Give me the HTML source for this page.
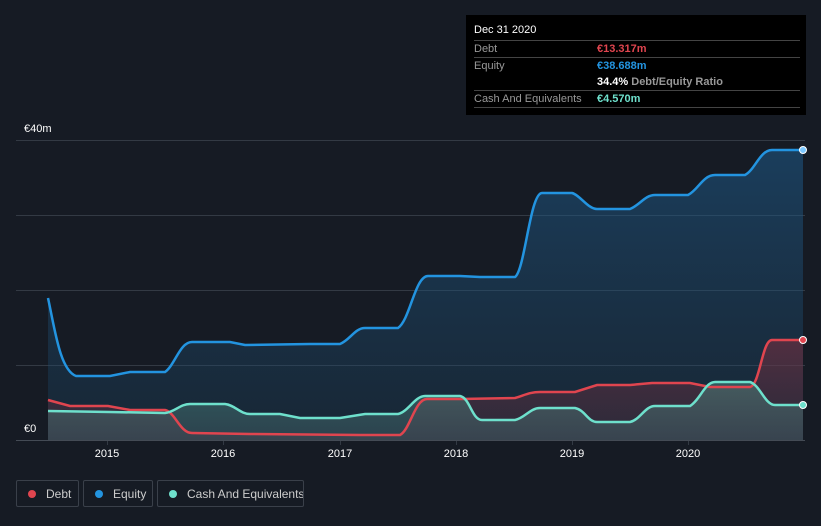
<!DOCTYPE html>
<html><head><style>
body{margin:0;width:821px;height:526px;background:#161b24;font-family:"Liberation Sans",sans-serif;overflow:hidden;position:relative}
.tt{position:absolute;left:466px;top:15px;width:340px;height:100px;background:#000;color:#fff;font-size:11px}
.row{position:absolute;left:8px;width:326px;border-top:1px solid #444}
.lbl{position:absolute;left:0;color:#999}
.val{position:absolute;left:123px;font-weight:bold;white-space:nowrap}
.leg{position:absolute;top:480px;height:27px;border:1px solid #3a404a;border-radius:2px;color:#ccc;font-size:12px;line-height:26px;box-sizing:border-box;white-space:nowrap;overflow:hidden}
.dot{display:inline-block;width:8px;height:8px;border-radius:50%;margin:0 10px 0 11px;vertical-align:0px}
</style></head><body>
<svg width="821" height="526" style="position:absolute;left:0;top:0">
<defs>
<linearGradient id="ge" x1="0" y1="0" x2="0" y2="1"><stop offset="0" stop-color="#1e5a8a" stop-opacity=".55"/><stop offset="1" stop-color="#1e4a6a" stop-opacity=".25"/></linearGradient>
<linearGradient id="gd" x1="0" y1="0" x2="0" y2="1"><stop offset="0" stop-color="#8a3040" stop-opacity=".5"/><stop offset="1" stop-color="#5a3040" stop-opacity=".3"/></linearGradient>
<linearGradient id="gc" x1="0" y1="0" x2="0" y2="1"><stop offset="0" stop-color="#4a8a80" stop-opacity=".5"/><stop offset="1" stop-color="#4a6a70" stop-opacity=".4"/></linearGradient>
</defs>
<g stroke="#333a44" stroke-width="1">
<line x1="16" y1="140.5" x2="805" y2="140.5"/><line x1="16" y1="215.5" x2="805" y2="215.5"/><line x1="16" y1="290.5" x2="805" y2="290.5"/><line x1="16" y1="365.5" x2="805" y2="365.5"/>
<line x1="16" y1="440.5" x2="805" y2="440.5" stroke="#444b55"/>
<line x1="107.5" y1="441" x2="107.5" y2="445"/><line x1="223.5" y1="441" x2="223.5" y2="445"/><line x1="340.5" y1="441" x2="340.5" y2="445"/><line x1="456.5" y1="441" x2="456.5" y2="445"/><line x1="572.5" y1="441" x2="572.5" y2="445"/><line x1="688.5" y1="441" x2="688.5" y2="445"/>
</g>
<path fill="url(#ge)" d="M48,298 C55,330 60,370 76,376 L110,376 L130,372 L165,372 C175,365 180,342 192,342 L230,342 L245,345 L310,344 L340,344 C350,340 355,328 365,328 L398,328 C410,320 415,276 428,276 L460,276 L480,277 L515,277 C525,270 530,193 542,193 L572,193 C580,195 588,209 597,209 L630,209 C640,205 645,195 655,195 L688,195 C698,190 703,175 715,175 L745,175 C755,170 760,150 772,150 L803,150 L803,440 L48,440Z"/>
<path fill="url(#gd)" d="M48,400 L70,406 L108,406 L130,410 L165,410 C175,412 180,433 192,433 L250,434 L360,435 L400,435 C410,430 415,399 427,399 L460,399 L515,398 C525,395 530,392 540,392 L575,392 L597,385 L630,385 L652,383 L690,383 L710,387 L750,387 C760,385 762,340 772,340 L803,340 L803,440 L48,440Z"/>
<path fill="url(#gc)" d="M48,411 L110,412 L165,413 C175,412 180,404 190,404 L225,404 C235,405 240,414 250,414 L280,414 L300,418 L340,418 L365,414 L398,414 C408,412 415,396 425,396 L460,396 C470,398 472,420 482,420 L515,420 C525,418 530,408 540,408 L575,408 C585,410 588,422 597,422 L630,422 C640,420 645,406 655,406 L690,406 C700,400 705,382 715,382 L750,382 C760,385 765,405 775,405 L803,405 L803,440 L48,440Z"/>
<g fill="none" stroke-width="2.5">
<path stroke="#e0454f" d="M48,400 L70,406 L108,406 L130,410 L165,410 C175,412 180,433 192,433 L250,434 L360,435 L400,435 C410,430 415,399 427,399 L460,399 L515,398 C525,395 530,392 540,392 L575,392 L597,385 L630,385 L652,383 L690,383 L710,387 L750,387 C760,385 762,340 772,340 L803,340"/>
<path stroke="#6ee0cc" d="M48,411 L110,412 L165,413 C175,412 180,404 190,404 L225,404 C235,405 240,414 250,414 L280,414 L300,418 L340,418 L365,414 L398,414 C408,412 415,396 425,396 L460,396 C470,398 472,420 482,420 L515,420 C525,418 530,408 540,408 L575,408 C585,410 588,422 597,422 L630,422 C640,420 645,406 655,406 L690,406 C700,400 705,382 715,382 L750,382 C760,385 765,405 775,405 L803,405"/>
<path stroke="#2394e0" d="M48,298 C55,330 60,370 76,376 L110,376 L130,372 L165,372 C175,365 180,342 192,342 L230,342 L245,345 L310,344 L340,344 C350,340 355,328 365,328 L398,328 C410,320 415,276 428,276 L460,276 L480,277 L515,277 C525,270 530,193 542,193 L572,193 C580,195 588,209 597,209 L630,209 C640,205 645,195 655,195 L688,195 C698,190 703,175 715,175 L745,175 C755,170 760,150 772,150 L803,150"/>
</g>
<circle cx="803" cy="150" r="3.5" fill="#7cc8ff" stroke="#fff" stroke-width="1"/>
<circle cx="803" cy="340" r="3.5" fill="#e0454f" stroke="#fff" stroke-width="1"/>
<circle cx="803" cy="405" r="3.5" fill="#6ee0cc" stroke="#fff" stroke-width="1"/>
<rect x="16" y="420" width="32" height="20" fill="#161b24"/>
<g fill="#fff" font-size="11" font-family="Liberation Sans,sans-serif">
<text x="24" y="132">€40m</text><text x="24" y="432">€0</text>
<g text-anchor="middle"><text x="107" y="457">2015</text><text x="223" y="457">2016</text><text x="340" y="457">2017</text><text x="456" y="457">2018</text><text x="572" y="457">2019</text><text x="688" y="457">2020</text></g>
</g>
</svg>
<div class="tt">
<div style="position:absolute;left:8px;top:9px">Dec 31 2020</div>
<div class="row" style="top:25px"><span class="lbl" style="top:2px">Debt</span><span class="val" style="top:2px;color:#e0454f">€13.317m</span></div>
<div class="row" style="top:42px"><span class="lbl" style="top:2px">Equity</span><span class="val" style="top:2px;color:#2394e0">€38.688m</span><span class="val" style="top:18px;color:#fff">34.4% <span style="color:#999;font-weight:bold">Debt/Equity Ratio</span></span></div>
<div class="row" style="top:75px"><span class="lbl" style="top:2px">Cash And Equivalents</span><span class="val" style="top:2px;color:#6ee0cc">€4.570m</span></div>
<div class="row" style="top:92px"></div>
</div>
<div class="leg" style="left:16px;width:63px"><span class="dot" style="background:#e0454f"></span>Debt</div>
<div class="leg" style="left:83px;width:70px"><span class="dot" style="background:#2394e0"></span>Equity</div>
<div class="leg" style="left:157px;width:147px"><span class="dot" style="background:#6ee0cc"></span>Cash And Equivalents</div>
</body></html>
